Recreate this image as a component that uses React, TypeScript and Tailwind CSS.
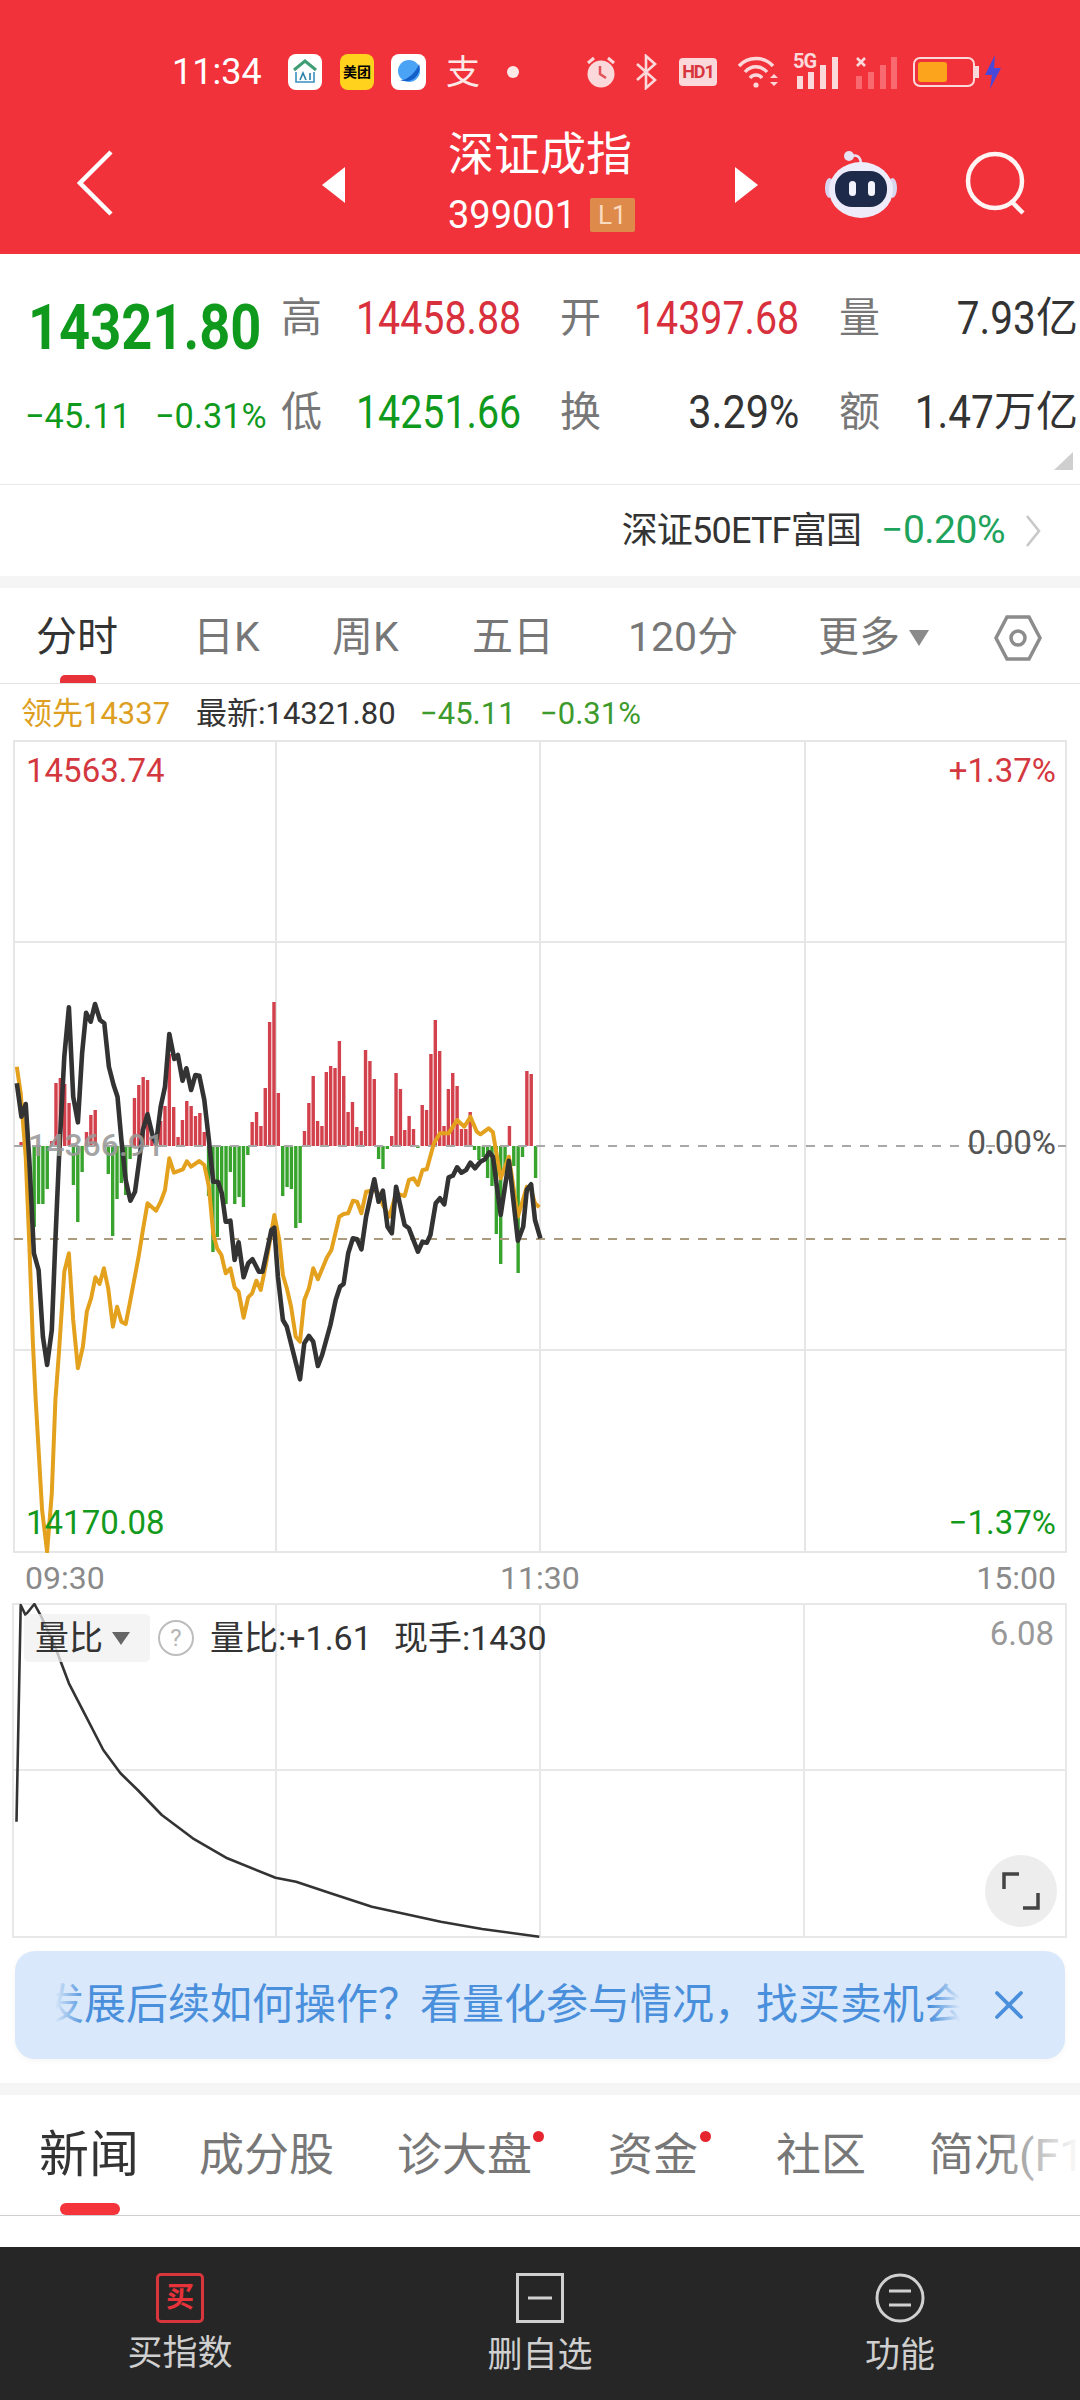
import React from 'react';
import { X } from 'lucide-react';

const bars = [
  4, 0, 0, -81, -58, -58, -43, 5, 63, 68, 62, 43, -39, -76, -26, 14, 31, 36, 0, 0,
  -28, -90, -53, -37, -49, -13, 48, 61, 69, 66, 9, 8, 25, 40, 92, 39, 9, 26, 45, 40,
  30, 33, 14, -50, -106, -91, -49, -58, -26, -58, -51, -61, -9, 24, 34, 20, 58, 124, 144, 53,
  -50, -41, -43, -82, -77, 15, 43, 70, 25, 20, 74, 80, 78, 105, 70, 34, 44, 19, 15, 96,
  85, 67, -13, -23, -3, 10, 73, 57, 16, 30, 17, -2, 41, 36, 92, 126, 95, 20, 57, 73,
  60, 17, 17, 34, -4, -14, -11, -32, -40, -88, -118, -21, 20, -20, -127, -11, 75, 72, -32,
];

const black = [
  47, 370, 60, 470, 72, 432, 82, 600, 95, 880, 108, 930, 120, 1130, 132, 1215, 145, 1110, 155, 840, 165, 600, 180, 290,
  193, 142, 205, 410, 218, 487, 230, 280, 241, 158, 254, 185, 266, 132, 280, 180, 292, 190, 305, 320, 318, 375, 329, 410,
  340, 540, 352, 660, 365, 722, 378, 695, 390, 600, 400, 510, 413, 463, 428, 530, 437, 550, 450, 440, 462, 380, 474, 222,
  488, 297, 498, 285, 511, 362, 522, 325, 535, 390, 547, 345, 558, 347, 572, 420, 585, 540, 597, 665, 610, 665, 621, 700,
  632, 785, 645, 782, 657, 900, 668, 847, 682, 952, 695, 910, 707, 898, 725, 935, 735, 935, 750, 860, 760, 810, 768, 803,
  778, 950, 792, 1080, 803, 1100, 840, 1258, 852, 1150, 865, 1128, 877, 1145, 890, 1218, 902, 1185, 925, 1095, 940, 1020,
  952, 980, 962, 972, 975, 880, 988, 835, 1000, 838, 1012, 868, 1025, 770, 1048, 658, 1060, 725, 1072, 692, 1085, 800,
  1097, 820, 1109, 680, 1133, 795, 1145, 805, 1170, 875, 1183, 845, 1195, 848, 1205, 825, 1220, 730, 1232, 715, 1244, 733,
  1256, 652, 1268, 647, 1280, 622, 1292, 638, 1305, 630, 1317, 608, 1330, 625, 1345, 605, 1358, 598, 1370, 577, 1380, 590,
  1402, 765, 1425, 602, 1450, 842, 1465, 800, 1475, 690, 1487, 673, 1498, 780, 1513, 835,
];

const orange = [
  47, 320, 58, 400, 72, 590, 82, 850, 92, 1150, 100, 1320, 118, 1650, 132, 1775, 145, 1600, 155, 1320, 165, 1180, 180, 935,
  193, 880, 205, 1080, 218, 1225, 232, 1160, 243, 1055, 255, 1015, 267, 952, 279, 972, 291, 925, 303, 985, 316, 1100,
  328, 1040, 340, 1085, 352, 1092, 365, 1020, 388, 890, 400, 810, 413, 730, 437, 752, 450, 725, 462, 690, 474, 595,
  487, 638, 512, 628, 523, 604, 535, 620, 558, 603, 572, 615, 585, 680, 597, 820, 608, 865, 620, 885, 632, 940, 645, 925,
  657, 982, 668, 995, 682, 1073, 695, 1012, 706, 1000, 718, 962, 730, 990, 745, 910, 768, 765, 782, 840, 792, 945,
  803, 985, 815, 1040, 828, 1130, 840, 1145, 852, 1020, 865, 985, 877, 925, 890, 958, 915, 893, 928, 870, 950, 770,
  962, 762, 975, 760, 988, 722, 1000, 725, 1012, 760, 1025, 695, 1048, 690, 1060, 700, 1072, 735, 1090, 770, 1109, 700,
  1133, 708, 1145, 660, 1158, 655, 1170, 675, 1183, 630, 1195, 628, 1215, 550, 1232, 520, 1256, 520, 1280, 480, 1300, 500,
  1317, 470, 1335, 515, 1345, 523, 1368, 505, 1380, 517, 1402, 655, 1425, 590, 1450, 770, 1475, 680, 1487, 690, 1498, 730, 1510, 742,
];

const ratio = [
  24, 725, 30, 75, 37, 105, 50, 72, 60, 110, 80, 200, 100, 310, 125, 410, 150, 510, 175, 580, 200, 630, 235, 705,
  280, 775, 330, 835, 400, 893, 430, 905, 480, 940, 540, 980, 640, 1025, 700, 1047, 783, 1070,
];

// traced points -> page pixels
const toPoints = (p: number[], sx: number, sy: number, oy: number) => {
  const out: string[] = [];
  for (let i = 0; i < p.length; i += 2) out.push(`${(p[i] / sx).toFixed(1)},${(oy + p[i + 1] / sy).toFixed(1)}`);
  return out.join(' ');
};

const StatusBar = () => (
  <div className="flex items-center h-[36px] mt-[54px] pl-[172px] text-white">
    <span className="w-[91px] text-[36px] leading-none">11:34</span>
    <div className="ml-[25px] w-[34px] h-[36px] bg-white rounded-[8px] flex items-center justify-center">
      <svg width="26" height="28" viewBox="0 0 26 28" fill="none">
        <path d="M2 12 L13 3 L24 12" stroke="#3f9e74" strokeWidth="3" />
        <path d="M4 14 V24 H22 V14" stroke="#3a8fc0" strokeWidth="1.6" />
        <path d="M8 22 L11 15 L14 22 M18 15 V22" stroke="#2a7fa8" strokeWidth="1.6" />
      </svg>
    </div>
    <div className="ml-[18px] w-[34px] h-[36px] bg-[#ffd21e] rounded-[8px] flex items-center justify-center text-[14px] leading-none text-black font-bold">美团</div>
    <div className="ml-[17px] w-[35px] h-[36px] bg-white rounded-[8px] flex items-center justify-center">
      <svg width="28" height="28" viewBox="0 0 28 28">
        <circle cx="14" cy="13" r="11" fill="#4aa3f5" />
        <path d="M5 23 C14 21 21 14 24 6 C27 14 20 24 10 23 Z" fill="#1560c8" />
      </svg>
    </div>
    <span className="ml-[20px] text-[34px] leading-none text-[#fde8e8]">支</span>
    <div className="ml-[27px] w-[12px] h-[12px] rounded-full bg-[#fde8e8]" />
    <svg className="ml-[66px]" width="32" height="36" viewBox="0 0 32 36">
      <circle cx="16" cy="20" r="13.5" fill="#fbd9da" />
      <path d="M3 9 L9 4 M29 9 L23 4" stroke="#fbd9da" strokeWidth="3" />
      <path d="M15 12 V20 L21 24" stroke="#e0535a" strokeWidth="2.5" fill="none" />
    </svg>
    <svg className="ml-[18px]" width="22" height="36" viewBox="0 0 22 36" fill="none" stroke="#fbd9da" strokeWidth="2.6">
      <path d="M2 10 L20 26 L11 34 V2 L20 10 L2 26" />
    </svg>
    <div className="ml-[22px] w-[38px] h-[28px] bg-[#fbd9da] rounded-[4px] flex items-center justify-center text-[18px] leading-none font-bold tracking-[-1px] text-[#d8363d]">HD1</div>
    <svg className="ml-[20px]" width="42" height="36" viewBox="0 0 42 36" fill="none" stroke="#fbd9da" strokeWidth="3.4">
      <path d="M2 12 C11 2 27 2 36 12" />
      <path d="M8 18 C14 11 24 11 30 18" />
      <path d="M13 24 C16 20 22 20 25 24" />
      <circle cx="19" cy="31" r="2.6" fill="#fbd9da" stroke="none" />
      <path d="M33 24 L37 20 L41 24 Z M33 28 L41 28 L37 32 Z" fill="#fbd9da" stroke="none" />
    </svg>
    <div className="ml-[14px] relative w-[48px] h-[36px]">
      <span className="absolute left-0 top-[-3px] text-[20px] leading-none font-bold tracking-[-1px] text-[#fbd9da]">5G</span>
      <svg className="absolute left-0 top-0" width="48" height="36" viewBox="0 0 48 36" fill="#fbd9da">
        <rect x="4" y="22" width="6" height="13" />
        <rect x="15" y="18" width="6" height="17" />
        <rect x="27" y="11" width="6" height="24" />
        <rect x="39" y="3" width="6" height="32" />
      </svg>
    </div>
    <div className="ml-[14px] relative w-[43px] h-[36px]">
      <svg className="absolute left-0 top-0" width="43" height="36" viewBox="0 0 43 36" fill="#f86a70">
        <path d="M2 4 L10 12 M10 4 L2 12" stroke="#fbd9da" strokeWidth="2.6" />
        <rect x="1" y="22" width="6" height="13" />
        <rect x="13" y="18" width="6" height="17" />
        <rect x="25" y="11" width="6" height="24" />
        <rect x="36" y="3" width="6" height="32" />
      </svg>
    </div>
    <div className="ml-[15px] w-[62px] h-[30px] border-[2.5px] border-[#fbd9da] rounded-[7px] p-[3px]">
      <div className="w-[29px] h-full bg-[#fba41c] rounded-[3px]" />
    </div>
    <div className="w-[4px] h-[12px] bg-[#fbd9da]" />
    <svg className="ml-[5px]" width="18" height="34" viewBox="0 0 18 34">
      <path d="M11 0 L1 20 H8 L6 34 L17 13 H10 Z" fill="#4a48d8" />
    </svg>
  </div>
);

const NavBar = () => (
  <div className="flex items-start h-[114px] relative">
    <svg className="ml-[77px] mt-[60px]" width="36" height="66" viewBox="0 0 36 66" fill="none">
      <path d="M34 2 L3 33 L34 64" stroke="white" strokeWidth="4.5" />
    </svg>
    <svg className="ml-[209px] mt-[77px]" width="23" height="36" viewBox="0 0 23 36">
      <path d="M23 0 V36 L0 18 Z" fill="white" />
    </svg>
    <div className="ml-[103px] w-[187px] flex flex-col mt-[38px] text-white">
      <span className="text-[46px] leading-[52px]">深证成指</span>
      <div className="flex items-center mt-[16px]">
        <span className="w-[130px] text-[38px] leading-none">399001</span>
        <span className="ml-[13px] w-[46px] h-[34px] bg-[#dd8a4a] text-[#fbdcc0] rounded-[2px] text-[26px] leading-[34px] text-center">L1</span>
      </div>
    </div>
    <svg className="absolute left-[735px] top-[77px]" width="23" height="36" viewBox="0 0 23 36">
      <path d="M0 0 V36 L23 18 Z" fill="white" />
    </svg>
    <svg className="absolute left-[825px] top-[59px]" width="72" height="70" viewBox="0 0 72 70">
      <path d="M36 16 C36 6 30 5 25 8" stroke="#e7e2f4" strokeWidth="2.5" fill="none" />
      <circle cx="24" cy="7" r="5" fill="#e7e2f4" />
      <ellipse cx="4.5" cy="39" rx="4.5" ry="10" fill="#d8d6ee" />
      <ellipse cx="67.5" cy="39" rx="4.5" ry="10" fill="#d8d6ee" />
      <ellipse cx="36" cy="41" rx="32" ry="28" fill="#eeecfa" />
      <rect x="10" y="22" width="52" height="36" rx="17" fill="#1e2a4a" />
      <rect x="24" y="32" width="7" height="15" rx="3.5" fill="#f4f4ff" />
      <rect x="43" y="32" width="7" height="15" rx="3.5" fill="#f4f4ff" />
    </svg>
    <svg className="absolute left-[964px] top-[60px]" width="64" height="66" viewBox="0 0 64 66" fill="none" stroke="#fff4f4" strokeWidth="4.5">
      <circle cx="31" cy="31" r="27" />
      <path d="M48 52 L59 63" />
    </svg>
  </div>
);

const Quote = () => (
  <div className="relative h-[231px] pt-[17px] border-b border-[#e9e9e9]">
    <div className="grid grid-cols-[281px_41px_238px_41px_238px_41px_198px] grid-rows-[94px_94px] items-center leading-none text-[#777] text-[41px]">
      <span className="pl-[28px] mt-[18px] text-[63px] font-bold text-[#0f9a1e] whitespace-nowrap">
        <span className="inline-block origin-left scale-x-[0.86]">14321.80</span>
      </span>
      <span>高</span>
      <span className="pr-[39px] text-right text-[46px] text-[#d8303c]">
        <span className="inline-block origin-right scale-x-[0.855]">14458.88</span>
      </span>
      <span>开</span>
      <span className="pr-[40px] text-right text-[46px] text-[#d8303c]">
        <span className="inline-block origin-right scale-x-[0.855]">14397.68</span>
      </span>
      <span>量</span>
      <span className="flex justify-end items-center text-[42px] text-[#333] pl-[0px]">
        <span className="inline-block origin-right scale-x-[0.88] text-[46px]">7.93</span>亿
      </span>

      <div className="flex pl-[25px] mt-[8px] text-[35px] text-[#0f9a1e]">
        <span className="w-[130px]">
          <span className="inline-block origin-left scale-x-[0.98]">−45.11</span>
        </span>
        <span className="inline-block origin-left scale-x-[0.98]">−0.31%</span>
      </div>
      <span>低</span>
      <span className="pr-[39px] text-right text-[46px] text-[#0f9a1e]">
        <span className="inline-block origin-right scale-x-[0.855]">14251.66</span>
      </span>
      <span>换</span>
      <span className="pr-[40px] text-right text-[46px] text-[#333]">
        <span className="inline-block origin-right scale-x-[0.9]">3.29%</span>
      </span>
      <span>额</span>
      <span className="flex justify-end items-center text-[42px] text-[#333]">
        <span className="inline-block origin-right scale-x-[0.88] text-[46px]">1.47</span>万亿
      </span>
    </div>
    <div className="absolute right-[7px] bottom-[14px] w-0 h-0 border-b-[18px] border-l-[19px] border-b-[#cfcfcf] border-l-transparent" />
  </div>
);

const Related = () => (
  <div className="flex items-center justify-end h-[91px] pr-[39px]">
    <span className="text-[36px] text-[#333] tracking-[-0.8px]">深证50ETF富国</span>
    <span className="ml-[20px] text-[39px] text-[#1fa35c] tracking-[-0.5px]">−0.20%</span>
    <svg className="ml-[20px]" width="16" height="32" viewBox="0 0 16 32" fill="none" stroke="#c8c8c8" strokeWidth="2.6">
      <path d="M2 1 L14 16 L2 31" />
    </svg>
  </div>
);

const Band = () => <div className="h-[12px] bg-[#f5f5f5]" />;

const ChartTabs = () => (
  <div className="relative flex items-center h-[96px] pt-[4px] border-b border-[#e3e3e3] text-[41px] leading-none text-[#777] whitespace-nowrap">
    <span className="ml-[36px] w-[82px] text-[#333]">分时</span>
    <span className="ml-[75px] w-[66px]">日K</span>
    <span className="ml-[73px] w-[68px]">周K</span>
    <span className="ml-[72px] w-[82px]">五日</span>
    <span className="ml-[74px] w-[114px]">120分</span>
    <span className="ml-[76px] w-[82px]">更多</span>
    <div className="ml-[9px] w-0 h-0 border-x-[10px] border-t-[16px] border-x-transparent border-t-[#8a8a8a]" />
    <svg className="ml-[65px]" width="48" height="46" viewBox="0 0 48 46" fill="none" stroke="#8c8c8c" strokeWidth="3.5">
      <path d="M13 2 H35 L46 23 L35 44 H13 L2 23 Z" />
      <circle cx="24" cy="23" r="7" />
    </svg>
    <div className="absolute left-[60px] bottom-0 w-[36px] h-[8px] bg-[#e8323a] rounded-t-[5px]" />
  </div>
);

const InfoLine = () => (
  <div className="flex items-center h-[56px] pl-[21px] pt-[3px] text-[31px] leading-none">
    <span className="w-[175px] text-[#dd9f22]">领先14337</span>
    <span className="w-[224px] text-[#333]">最新:14321.80</span>
    <span className="w-[120px] text-[#3d9a2c]">−45.11</span>
    <span className="text-[#3d9a2c]">−0.31%</span>
  </div>
);

const PriceChart = () => (
  <div className="relative ml-[13px] w-[1054px] h-[813px] text-[33px] leading-none">
    <svg className="w-full h-full" viewBox="13 740 1054 813" fill="none">
      <g stroke="#e6e6e6" strokeWidth="2">
        <rect x="14" y="741" width="1052" height="811" />
        <path d="M276 741 V1552 M540 741 V1552 M805 741 V1552 M14 942 H1066 M14 1350 H1066" />
      </g>
      {bars.map((v, k) =>
        v === 0 ? null : (
          <rect
            key={k}
            x={19.4 + 4.36 * k}
            y={v > 0 ? 1146 - v : 1146}
            width="3.4"
            height={Math.abs(v)}
            fill={v > 0 ? '#d2414c' : '#38a42e'}
          />
        ),
      )}
      <path d="M14 1146 H1066" stroke="#a8a8a8" strokeWidth="2" strokeDasharray="9 9" />
      <path d="M14 1239 H1066" stroke="#ab9c80" strokeWidth="2" strokeDasharray="9 9" />
      <polyline points={toPoints(orange, 2.8, 3, 960)} stroke="#e3a11e" strokeWidth="4" strokeLinejoin="round" />
      <polyline points={toPoints(black, 2.8, 3, 960)} stroke="#333333" strokeWidth="4.6" strokeLinejoin="round" />
    </svg>
    <span className="absolute left-[13px] top-[14px] text-[#d4383f]">14563.74</span>
    <span className="absolute right-[11px] top-[14px] text-[#d4383f]">+1.37%</span>
    <span className="absolute left-[13px] bottom-[14px] text-[#139a1c]">14170.08</span>
    <span className="absolute right-[11px] bottom-[14px] text-[#139a1c]">−1.37%</span>
    <span className="absolute right-[11px] top-[386px] text-[#555]">0.00%</span>
    <span className="absolute left-[15px] top-[389px] text-[32px] font-medium text-[#999]/90">14366.91</span>
  </div>
);

const TimeAxis = () => (
  <div className="relative flex justify-between items-center h-[50px] pl-[25px] pr-[24px] text-[32px] leading-none text-[#8a8a8a]">
    <span>09:30</span>
    <span className="absolute left-[500px]">11:30</span>
    <span>15:00</span>
  </div>
);

const RatioChart = () => (
  <div className="relative ml-[12px] w-[1055px] h-[335px]">
    <svg className="w-full h-full" viewBox="12 1603 1055 335" fill="none">
      <g stroke="#e8e8e8" strokeWidth="2">
        <rect x="13" y="1604" width="1053" height="333" />
        <path d="M276 1604 V1937 M540 1604 V1937 M804 1604 V1937 M13 1770 H1066" />
      </g>
      <polyline points={toPoints(ratio, 1.452, 3, 1580)} stroke="#333333" strokeWidth="2.6" strokeLinejoin="round" />
    </svg>
    <div className="absolute left-[12px] top-[11px] flex items-center h-[48px]">
      <div className="flex items-center w-[126px] h-[48px] pl-[11px] bg-[#f0f0f0]/75 rounded-[5px] text-[34px] leading-none text-[#333]">
        量比
        <div className="ml-[9px] w-0 h-0 border-x-[9px] border-t-[13px] border-x-transparent border-t-[#666]" />
      </div>
      <div className="ml-[8px] w-[36px] h-[36px] rounded-full border-2 border-[#bdbdbd] text-[24px] leading-[32px] text-center text-[#b5b5b5]">?</div>
      <span className="ml-[16px] w-[184px] text-[34px] leading-none text-[#333]">量比:+1.61</span>
      <span className="text-[34px] leading-none text-[#333]">现手:1430</span>
    </div>
    <span className="absolute right-[13px] top-[14px] text-[33px] leading-none text-[#999]">6.08</span>
    <div className="absolute left-[973px] top-[252px] w-[72px] h-[72px] rounded-full bg-[#ececec]/95 flex items-center justify-center">
      <svg width="38" height="38" viewBox="0 0 38 38" fill="none" stroke="#444" strokeWidth="3.5">
        <path d="M2 17 V2 H17" />
        <path d="M36 21 V36 H21" />
      </svg>
    </div>
  </div>
);

const Banner = () => (
  <div className="flex items-center mx-[15px] mt-[13px] h-[108px] pl-[40px] bg-[#d9e8fa] rounded-[20px] shadow-[0_2px_6px_rgba(0,0,0,0.04)]">
    <div className="relative w-[905px] h-[60px] overflow-hidden flex items-center whitespace-nowrap text-[42px] leading-none text-[#4a8fdc]">
      <span className="ml-[-13px]">发展后续如何操作？看量化参与情况，找买卖机会</span>
      <div className="absolute left-0 top-0 w-[30px] h-full bg-gradient-to-r from-[#d9e8fa] to-transparent" />
      <div className="absolute right-0 top-0 w-[30px] h-full bg-gradient-to-l from-[#d9e8fa] to-transparent" />
    </div>
    <X className="ml-[25px] w-[48px] h-[48px] text-[#4a8fdc]" strokeWidth={1.9} />
  </div>
);

const NewsTabs = () => (
  <div className="relative flex items-center h-[121px] border-b border-[#cfcfcf] text-[45px] leading-none text-[#777] overflow-hidden whitespace-nowrap">
    <span className="ml-[39px] w-[100px] text-[50px] text-[#333]">新闻</span>
    <span className="ml-[60px] w-[136px]">成分股</span>
    <span className="ml-[63px] w-[136px]">诊大盘</span>
    <span className="ml-[76px] w-[90px]">资金</span>
    <span className="ml-[78px] w-[90px]">社区</span>
    <span className="ml-[63px]">简况(F1</span>
    <div className="absolute left-[533px] top-[36px] w-[11px] h-[11px] rounded-full bg-[#e5262e]" />
    <div className="absolute left-[700px] top-[36px] w-[11px] h-[11px] rounded-full bg-[#e5262e]" />
    <div className="absolute left-[60px] bottom-0 w-[60px] h-[12px] bg-[#f4343a] rounded-[6px]" />
    <div className="absolute right-0 top-0 w-[90px] h-full bg-gradient-to-r from-transparent to-white" />
  </div>
);

const BottomBar = () => (
  <div className="grid grid-cols-3 h-[153px] bg-[#262626] text-[35px] leading-none text-[#cfcfcf]">
    <div className="flex flex-col items-center pt-[26px]">
      <div className="flex items-center justify-center w-[48px] h-[50px] border-[3px] border-[#d8353d] rounded-[5px] text-[28px] leading-none font-bold text-[#e8323a]">买</div>
      <span className="mt-[13px]">买指数</span>
    </div>
    <div className="flex flex-col items-center pt-[26px]">
      <svg width="48" height="50" viewBox="0 0 48 50" fill="none" stroke="#d0d0d0" strokeWidth="3">
        <rect x="1.5" y="1.5" width="45" height="47" />
        <path d="M12 25 H36" />
      </svg>
      <span className="mt-[15px]">删自选</span>
    </div>
    <div className="flex flex-col items-center pt-[25px]">
      <svg width="50" height="52" viewBox="0 0 50 52" fill="none" stroke="#d0d0d0" strokeWidth="3">
        <circle cx="25" cy="26" r="23" />
        <path d="M14 19 H36 M14 33 H36" />
      </svg>
      <span className="mt-[14px]">功能</span>
    </div>
  </div>
);

export default function App() {
  return (
    <div className="w-[1080px] h-[2400px] bg-white overflow-hidden font-['Roboto','Noto_Sans_CJK_SC',sans-serif]">
      <div className="h-[254px] bg-[#f2323b] flex flex-col">
        <StatusBar />
        <NavBar />
      </div>
      <Quote />
      <Related />
      <Band />
      <ChartTabs />
      <InfoLine />
      <PriceChart />
      <TimeAxis />
      <RatioChart />
      <Banner />
      <div className="h-[24px]" />
      <Band />
      <NewsTabs />
      <div className="h-[31px]" />
      <BottomBar />
    </div>
  );
}
